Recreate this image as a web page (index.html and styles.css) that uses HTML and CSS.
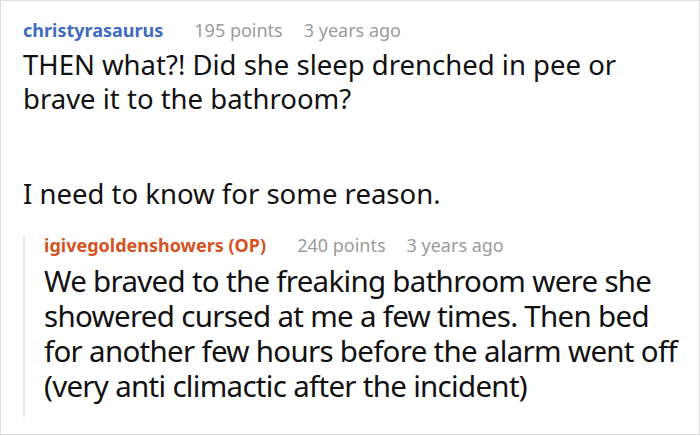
FILE: index.html
```html
<!DOCTYPE html>
<html>
<head>
<meta charset="utf-8">
<link rel="stylesheet" href="styles.css">
</head>
<body>
<div class="frame">
  <div class="comment">
    <div class="meta">
      <span class="user">christyrasaurus</span>
      <span class="info">195 points</span>
      <span class="info">3 years ago</span>
    </div>
    <div class="body top">
      <p class="para">THEN what?! Did she sleep drenched in pee or brave it to the bathroom?</p>
      <p class="para">I need to know for some reason.</p>
    </div>
    <div class="reply">
      <div class="meta reply-meta">
        <span class="user op">igivegoldenshowers (OP)</span>
        <span class="info">240 points</span>
        <span class="info">3 years ago</span>
      </div>
      <div class="body reply-body">
        <p class="para">We braved to the freaking bathroom were she showered cursed at me a few times. Then bed for another few hours before the alarm went off (very anti climactic after the incident)</p>
      </div>
    </div>
  </div>
</div>
</body>
</html>
```

FILE: styles.css
```css
html, body {
  margin: 0;
  padding: 0;
  background: #ffffff;
}
.frame {
  width: 700px;
  height: 435px;
  box-sizing: border-box;
  border: 1px solid #dedede;
  overflow: hidden;
  font-family: "Noto Sans", "Open Sans", sans-serif;
}
.comment {
  padding: 16px 0 0 22px;
}
.meta {
  display: flex;
  gap: 21px;
  font-size: 18px;
  line-height: 26px;
}
.user {
  font-weight: 700;
  color: #3d6cc0;
  margin-right: 10px;
}
.user.op {
  color: #d4531f;
}
.info {
  color: #9b9b9b;
}
.body {
  color: #111111;
  line-height: 34px;
}
.top {
  font-size: 27.5px;
  margin-top: 5px;
  max-width: 625px;
}
.para {
  margin: 0 0 61px 0;
}
.para:last-child {
  margin-bottom: 0;
}
.reply {
  margin-top: 25px;
  border-left: 2px solid #e6e6e6;
  padding-left: 19px;
  padding-bottom: 14px;
}
.reply-meta {
  line-height: 18px;
}
.reply-body {
  font-size: 29.5px;
  letter-spacing: -0.7px;
  line-height: 35px;
  margin-top: 9px;
  max-width: 645px;
}
```
